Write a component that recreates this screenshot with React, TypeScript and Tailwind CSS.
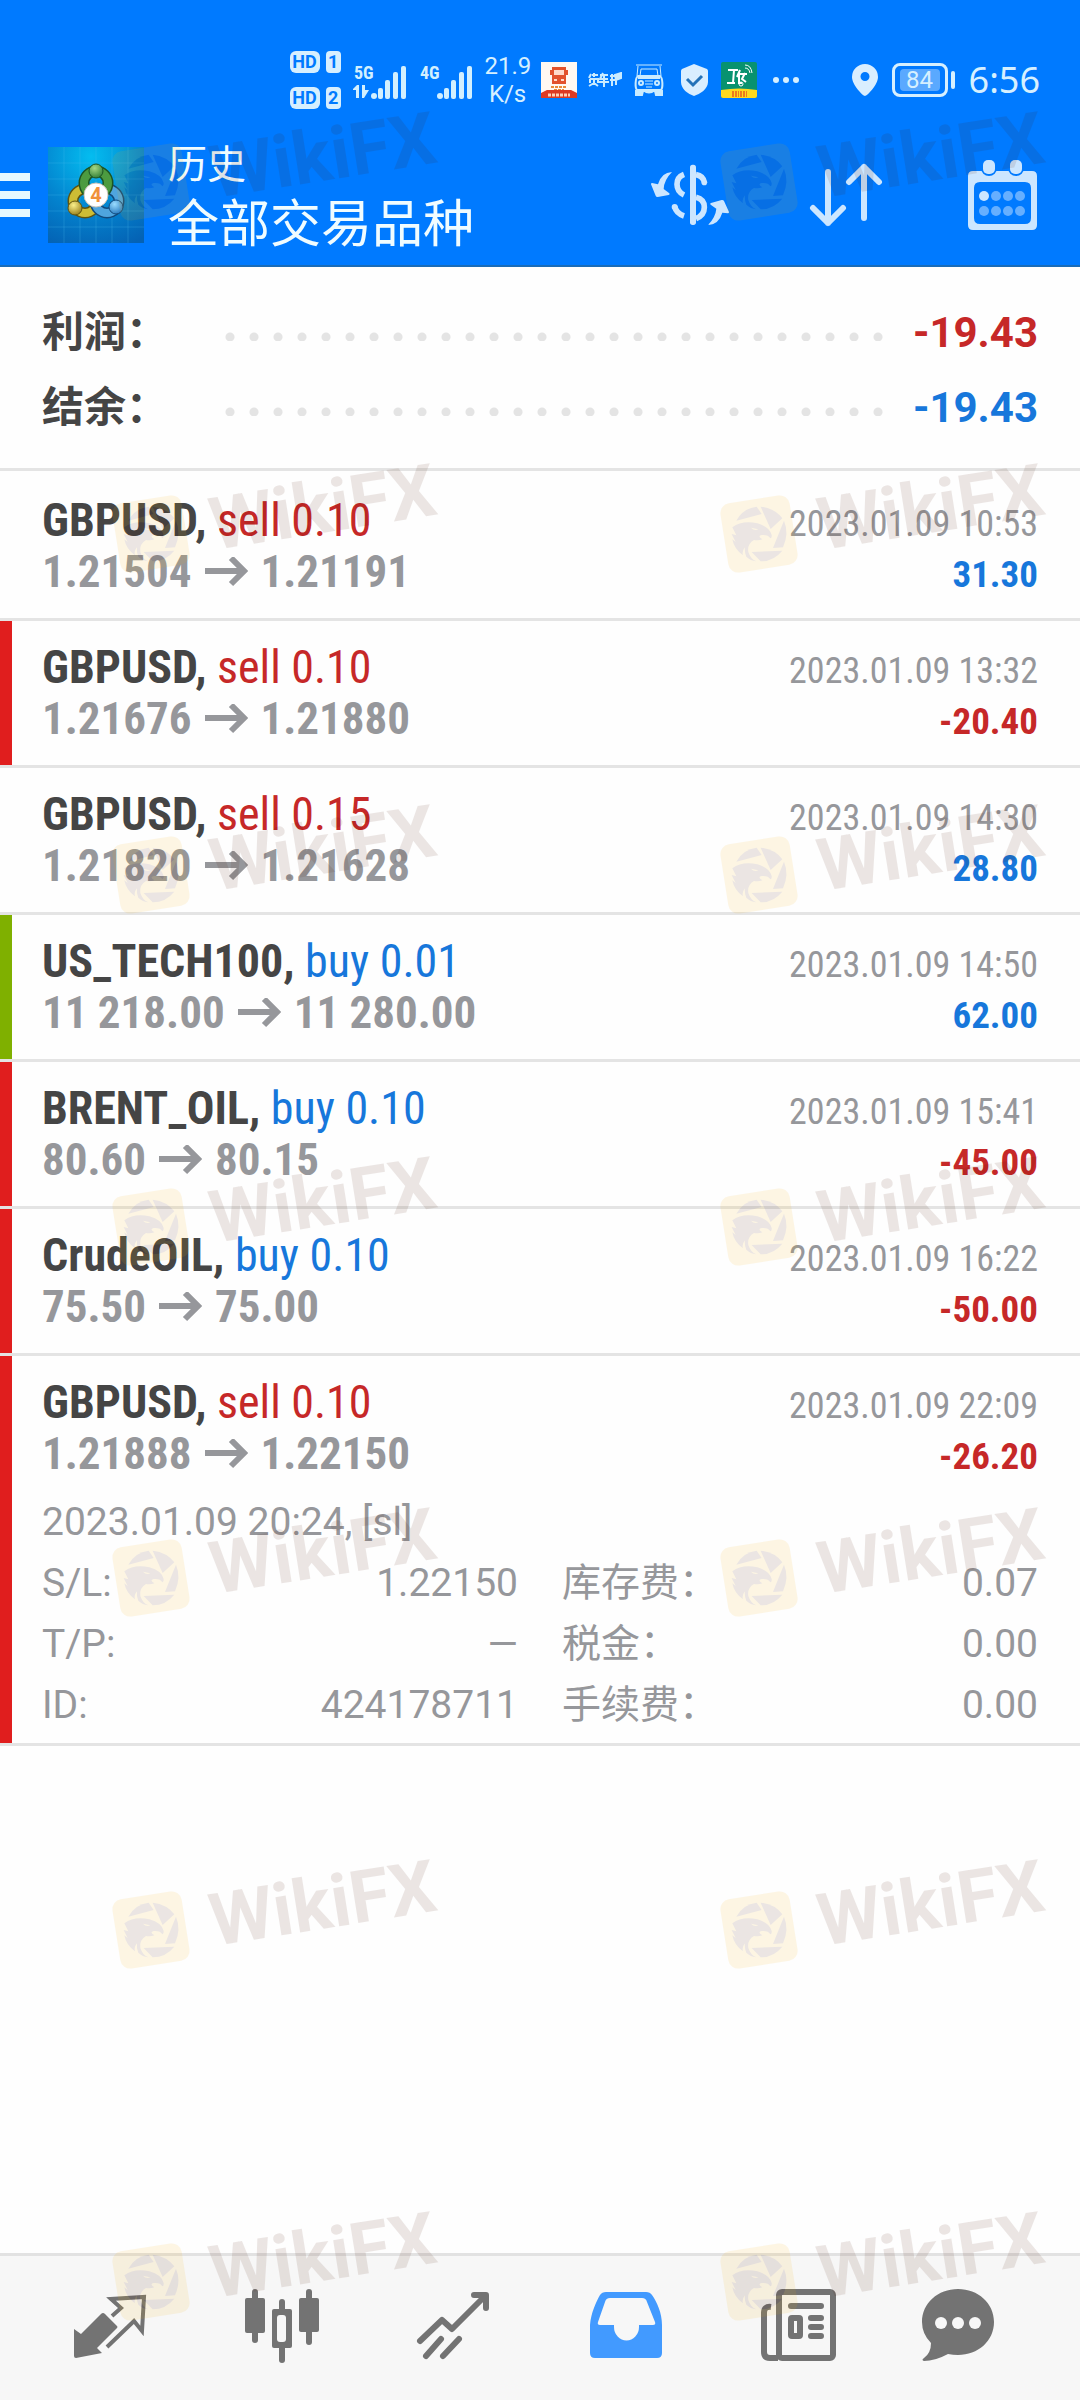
import React, { useState } from 'react';

interface Deal {
  symbol: string;
  side: 'buy' | 'sell';
  volume: string;
  open: string;
  close: string;
  time: string;
  profit: string;
  mark?: 'sl' | 'tp';
}

const deals: Deal[] = [
  { symbol: 'GBPUSD', side: 'sell', volume: '0.10', open: '1.21504', close: '1.21191', time: '2023.01.09 10:53', profit: '31.30' },
  { symbol: 'GBPUSD', side: 'sell', volume: '0.10', open: '1.21676', close: '1.21880', time: '2023.01.09 13:32', profit: '-20.40', mark: 'sl' },
  { symbol: 'GBPUSD', side: 'sell', volume: '0.15', open: '1.21820', close: '1.21628', time: '2023.01.09 14:30', profit: '28.80' },
  { symbol: 'US_TECH100', side: 'buy', volume: '0.01', open: '11 218.00', close: '11 280.00', time: '2023.01.09 14:50', profit: '62.00', mark: 'tp' },
  { symbol: 'BRENT_OIL', side: 'buy', volume: '0.10', open: '80.60', close: '80.15', time: '2023.01.09 15:41', profit: '-45.00', mark: 'sl' },
  { symbol: 'CrudeOIL', side: 'buy', volume: '0.10', open: '75.50', close: '75.00', time: '2023.01.09 16:22', profit: '-50.00', mark: 'sl' },
  { symbol: 'GBPUSD', side: 'sell', volume: '0.10', open: '1.21888', close: '1.22150', time: '2023.01.09 22:09', profit: '-26.20', mark: 'sl' },
];

const details = [
  ['S/L:', '1.22150', '库存费：', '0.07'],
  ['T/P:', '—', '税金：', '0.00'],
  ['ID:', '424178711', '手续费：', '0.00'],
];

const watermarkTops = [92, 444, 785, 1137, 1488, 1840, 2192];

const Signal: React.FC<{ label: string; data?: boolean }> = ({ label, data }) => (
  <svg className="h-10 w-[54px] overflow-visible" viewBox="0 -4 54 40" fill="#d2f0ff">
    <text x="1" y="15" fontSize="18" fontWeight="700" fontFamily="'Roboto Condensed', Roboto, sans-serif">{label}</text>
    {data && <path d="M0 25l4-4h2v13H3v-8H0zM9 21h3v5h4l-5 8H9z" />}
    <circle cx="21" cy="32" r="3" />
    <rect x="25" y="24" width="5" height="11" rx="2" />
    <rect x="32" y="16" width="5" height="19" rx="2" />
    <rect x="40" y="8" width="5" height="27" rx="2" />
    <rect x="48" y="2" width="5" height="33" rx="2" />
  </svg>
);

const SimBadge: React.FC<{ slot: string }> = ({ slot }) => (
  <div className="flex items-center gap-1.5 text-[18px] leading-[22px] font-bold text-[#007aff]">
    <span className="w-[30px] rounded-md bg-[#d6efff] text-center">HD</span>
    <span className="w-[15px] rounded bg-[#d6efff] text-center">{slot}</span>
  </div>
);

const StatusBar: React.FC = () => (
  <div className="flex h-16 items-center justify-end pr-10 text-[#d6f0ff]">
    <div className="flex flex-col gap-3.5">
      <SimBadge slot="1" />
      <SimBadge slot="2" />
    </div>
    <div className="ml-3 flex gap-3">
      <Signal label="5G" data />
      <Signal label="4G" />
    </div>
    <div className="ml-3 w-[46px] text-center text-[24px] leading-7">21.9 K/s</div>
    <svg className="ml-2.5 size-9" viewBox="0 0 36 36">
      <rect width="36" height="36" fill="#fff8f2" />
      <path d="M11 5h14v3h2v5h-2v9H11v-9H9V8h2z" fill="#e2512c" />
      <path d="M13 8h10v5H13zM13 17h3v2h-3zM20 17h3v2h-3z" fill="#ffd9c9" />
      <path d="M10 25h16M13 28h10" stroke="#e98b3a" strokeWidth="2" strokeDasharray="3 1" />
      <path d="M0 31l6-3h24l6 3v5H0z" fill="#dd3a24" />
      <path d="M7 33h22" stroke="#ffd0b8" strokeWidth="3" strokeDasharray="3 1" />
    </svg>
    <svg className="ml-[11px] h-4 w-[34px]" viewBox="0 0 34 16" fill="none" stroke="#c9ebff" strokeWidth="2">
      <path d="M3 2L1 6M6 1v4M4 3h6M2 7h8v4M2 7v4M6 8v3l-5 3M6 11l4 3M12 3h8M15 1l-3 6h8M11 10h10M16 4v11M22 4h5M24 2v12M22 8h5" />
      <path d="M27 3l6-2v5l-5 2zM28 8v5" fill="#c9ebff" />
    </svg>
    <svg className="ml-3 h-8 w-[30px]" viewBox="0 0 30 32" fill="none" stroke="#c9ebff">
      <path d="M2 1h26M4 2L3 12M26 2l1 10M7 5h16l1 7H6z" strokeWidth="1" />
      <path d="M4 12C1 14 1 24 3 26h24c2-2 2-12-1-14zM4 14h22" strokeWidth="2" />
      <path d="M2 26v5h6l1-4M28 26v5h-6l-1-4M9 26q6 5 12 0" strokeWidth="2" fill="#c9ebff" />
      <circle cx="7" cy="19" r="2" strokeWidth="2" />
      <circle cx="23" cy="19" r="2" strokeWidth="2" />
      <path d="M11 17h8M11 20h8M12 23h6" strokeWidth="1" />
    </svg>
    <svg className="ml-4 h-[34px] w-[29px]" viewBox="0 0 29 34">
      <path d="M14 1L27 6q1 1 1 2v11C28 26 20 31 14 33 8 31 1 26 1 19V8q0-1 1-2z" fill="#d9eeff" />
      <path d="M7 16l6 6 9-9" fill="none" stroke="#2472b8" strokeWidth="3" />
    </svg>
    <svg className="ml-3 size-9" viewBox="0 0 36 36">
      <rect width="36" height="36" rx="2" fill="#08926f" />
      <path d="M7 8h10M13 8l-1 13M6 21h8M19 8l-3 7M18 12h8M18 12v9h3M24 11l-3 6 4 3" stroke="#fff" strokeWidth="2" fill="none" />
      <circle cx="20" cy="22" r="2" stroke="#fff" fill="none" />
      <path d="M24 6q4 0 5 5M24 3q6 0 7 8" stroke="#fff" fill="none" />
      <path d="M0 28q18-3 36 0v6q0 2-2 2H2q-2 0-2-2z" fill="#ffd91e" />
      <path d="M11 32h7M19 32h7" stroke="#ee7b1b" strokeWidth="6" strokeDasharray="2 1" />
    </svg>
    <svg className="ml-[15px] h-2 w-7" viewBox="0 0 28 8" fill="#d6f0ff">
      <circle cx="4" cy="4" r="3" />
      <circle cx="14" cy="4" r="3" />
      <circle cx="24" cy="4" r="3" />
    </svg>
    <svg className="ml-[52px] h-8 w-[26px]" viewBox="0 0 26 32">
      <path d="M13 0a13 13 0 0 1 13 13C26 21 15 32 13 32S0 21 0 13A13 13 0 0 1 13 0zm0 8a4 4 0 1 0 0 9 4 4 0 0 0 0-9z" fill="#d9eeff" fillRule="evenodd" />
    </svg>
    <div className="ml-3.5 flex items-center gap-[3px]">
      <div className="flex h-[34px] w-14 items-center justify-center rounded-lg border-[3px] border-[#d6f0ff]">
        <span className="w-10 rounded bg-[#5aa9ff] text-center text-[24px] leading-[22px]">84</span>
      </div>
      <div className="h-[18px] w-1 rounded bg-[#d6f0ff]" />
    </div>
    <span className="ml-3.5 font-['Noto_Sans',sans-serif] text-[36px] leading-10">6:56</span>
  </div>
);

const AppLogo: React.FC = () => (
  <svg className="ml-[18px] size-24" viewBox="0 0 96 96">
    <defs>
      <radialGradient id="sky" cx=".45" cy=".1" r="1">
        <stop offset="0" stopColor="#04bdf0" />
        <stop offset=".55" stopColor="#0384cf" />
        <stop offset="1" stopColor="#0462b4" />
      </radialGradient>
      <radialGradient id="green" cx=".4" cy=".3" r=".8"><stop offset="0" stopColor="#a5d884" /><stop offset="1" stopColor="#27762e" /></radialGradient>
      <radialGradient id="gold" cx=".4" cy=".3" r=".8"><stop offset="0" stopColor="#fbf08a" /><stop offset="1" stopColor="#8f7510" /></radialGradient>
      <radialGradient id="azure" cx=".4" cy=".3" r=".8"><stop offset="0" stopColor="#9bdcff" /><stop offset="1" stopColor="#1c70b8" /></radialGradient>
    </defs>
    <rect width="96" height="96" fill="url(#sky)" />
    <path d="M0 16h96M0 32h96M0 48h96M0 64h96M0 80h96M16 0v96M32 0v96M48 0v96M64 0v96M80 0v96" stroke="#4fc3ee" strokeOpacity=".25" />
    <g fill="none" strokeWidth="8">
      <circle cx="37" cy="54" r="12" stroke="#5f5410" strokeWidth="11" />
      <circle cx="37" cy="54" r="12" stroke="#cdbd35" />
      <circle cx="59" cy="54" r="12" stroke="#124a7c" strokeWidth="11" />
      <circle cx="59" cy="54" r="12" stroke="#4fa5de" />
      <circle cx="48" cy="36" r="12" stroke="#1d5423" strokeWidth="11" />
      <circle cx="48" cy="36" r="12" stroke="#4c9b40" />
    </g>
    <circle cx="48" cy="24" r="7" fill="url(#green)" stroke="#1d5423" />
    <circle cx="27" cy="61" r="7" fill="url(#gold)" stroke="#5f5410" />
    <circle cx="68" cy="60" r="7" fill="url(#azure)" stroke="#124a7c" />
    <circle cx="48" cy="48" r="12" fill="#fff" stroke="#c9c4bb" />
    <text x="48" y="55" textAnchor="middle" fontSize="20" fontWeight="700" fontFamily="Roboto, sans-serif" fill="#f0913a">4</text>
  </svg>
);

const CurrencyIcon: React.FC = () => (
  <svg className="h-[62px] w-[78px]" viewBox="93 156 234 186" fill="#cce6ff">
    <rect x="210" y="158" width="18" height="181" rx="8" />
    <path d="M192 187q-21 8-21 30t21 32M164 283q4 21 28 29M228 188q22 3 26 26M228 256q25 6 25 30t-25 34" fill="none" stroke="#cce6ff" strokeWidth="17" />
    <circle cx="253" cy="212" r="8" />
    <circle cx="164" cy="285" r="9" />
    <path d="M156 180q-32 1-42 37l-18-4q-3 0-3 4l14 34q1 4 6 4l33-6q5-1 2-5l-17-13q1-27 25-51z" />
    <path d="M264 339q32-1 43-37l17 2q3 0 3-4l-15-33q-2-4-7-3l-32 9q-5 2-1 5l17 12q-2 25-25 49z" />
  </svg>
);

const SortIcon: React.FC = () => (
  <svg className="h-16 w-[74px]" viewBox="0 0 74 64" fill="none" stroke="#cce6ff" strokeWidth="6" strokeLinecap="round" strokeLinejoin="round">
    <path d="M19 9v51M4 45l15 15 15-15" />
    <path d="M55 55V4M40 19L55 4l15 15" />
  </svg>
);

const CalendarIcon: React.FC = () => (
  <svg className="h-[72px] w-[70px]" viewBox="0 0 70 72">
    <path d="M5 12H64q5 0 5 5V66q0 5-5 5H5q-5 0-5-5V17q0-5 5-5zM12 23q-6 0-6 6V59q0 6 6 6H57q6 0 6-6V29q0-6-6-6z" fill="#cce6ff" fillRule="evenodd" />
    <rect x="13" y="-1" width="16" height="18" rx="8" fill="#007aff" />
    <rect x="40" y="-1" width="16" height="18" rx="8" fill="#007aff" />
    <rect x="15" y="1" width="12" height="14" rx="5" fill="#cce6ff" />
    <rect x="42" y="1" width="12" height="14" rx="5" fill="#cce6ff" />
    {[16, 28, 40, 52].map((x) => (
      <g key={x} fill="#66afff">
        <circle cx={x} cy="37" r="5" fill={x === 16 ? '#cce6ff' : '#66afff'} />
        <circle cx={x} cy="52" r="5" />
      </g>
    ))}
  </svg>
);

const Summary: React.FC<{ label: string; value: string; tone: string }> = ({ label, value, tone }) => (
  <div className="flex items-center text-[42px] leading-[75px] font-bold">
    <dt className="w-44 text-[#454545]">{label}</dt>
    <div className="h-4 flex-1 bg-[radial-gradient(circle,#e4e4e4_4px,transparent_5px)] bg-[length:24px_24px] bg-repeat-x" />
    <dd className={`w-[148px] text-right ${tone}`}>{value}</dd>
  </div>
);

const DealRow: React.FC<{ deal: Deal; open?: boolean }> = ({ deal, open }) => (
  <li className="flex border-b-[3px] border-[#e4e4e4]">
    <div className={`w-3 ${deal.mark === 'sl' ? 'bg-[#e01e1e]' : deal.mark === 'tp' ? 'bg-[#7fb000]' : ''}`} />
    <div className="flex-1 pl-[30px] pr-[42px]">
      <div className="py-5 font-['Roboto_Condensed',Roboto,sans-serif] leading-[52px]">
        <div className="flex h-[52px] items-baseline justify-between">
          <h2 className="text-[46px]">
            <span className="font-bold text-[#454545]">{deal.symbol},</span>{' '}
            <span className={deal.side === 'buy' ? 'text-[#1777db]' : 'text-[#c62828]'}>{deal.side} {deal.volume}</span>
          </h2>
          <time className="text-[36px] text-[#96979b]">{deal.time}</time>
        </div>
        <div className="flex h-[52px] items-baseline justify-between font-bold">
          <p className="flex items-baseline text-[45px] text-[#96979b]">
            {deal.open}
            <svg className="mx-[13px] h-[30px] w-[43px]" viewBox="0 0 43 30" fill="none" stroke="currentColor" strokeWidth="6">
              <path d="M0 14h38M26 1l13 13-13 13" />
            </svg>
            {deal.close}
          </p>
          <span className={`text-[37px] ${deal.profit.startsWith('-') ? 'text-[#c62828]' : 'text-[#1777db]'}`}>{deal.profit}</span>
        </div>
      </div>
      {open && (
        <div className="-mt-2 pb-[7px] text-[39px] leading-[61px] text-[#96979b]">
          <p>2023.01.09 20:24, [sl]</p>
          <dl className="grid grid-cols-2 gap-x-11">
            {details.map(([a, b, c, d]) => (
              <React.Fragment key={a}>
                <div className="flex h-[61px] justify-between"><dt>{a}</dt><dd>{b}</dd></div>
                <div className="flex h-[61px] justify-between"><dt>{c}</dt><dd>{d}</dd></div>
              </React.Fragment>
            ))}
          </dl>
        </div>
      )}
    </div>
  </li>
);

const tabs = [
  {
    name: '行情',
    icon: (
      <svg className="size-[76px]" viewBox="0 0 76 76" fill="currentColor">
        <path d="M2 41l7 5L29 26q2-2 4 0l12 12q1 1 0 2L25 60l5 5L4 70Q2 70 2 68z" />
        <path d="M40 28l9-8L39 11 72 9l-2 34-8-10-27 26" fill="none" stroke="currentColor" strokeWidth="4" />
      </svg>
    ),
  },
  {
    name: '图表',
    icon: (
      <svg className="size-[76px]" viewBox="0 0 76 76" fill="currentColor">
        <rect x="1" y="10" width="20" height="35" rx="2" />
        <rect x="8" y="1" width="6" height="54" rx="3" />
        <rect x="28" y="21" width="20" height="39" rx="2" />
        <rect x="35" y="11" width="6" height="64" rx="3" />
        <rect x="33" y="27" width="9" height="27" rx="3" fill="#f7f7f7" />
        <rect x="55" y="10" width="20" height="34" rx="2" />
        <rect x="62" y="1" width="6" height="56" rx="3" />
      </svg>
    ),
  },
  {
    name: '交易',
    icon: (
      <svg className="size-[76px]" viewBox="0 0 76 76" fill="none" stroke="currentColor" strokeWidth="6" strokeLinecap="round">
        <path d="M4 53l22-21 10 9L69 8M58 7h12v13" strokeLinejoin="round" />
        <path d="M10 68l15-17M27 68l16-17" />
      </svg>
    ),
  },
  {
    name: '历史',
    icon: (
      <svg className="size-[76px]" viewBox="0 0 76 76" fill="currentColor" fillRule="evenodd">
        <path d="M2 37C3 25 8 14 12 7Q14 4 18 4H58Q62 4 64 7C69 14 74 25 74 37V65q0 5-5 5H7q-5 0-5-5zM12 37H26V39A12 13 0 0 0 51 39V37H65Q68 37 67 34L59 14Q58 10 54 10H22Q18 10 17 14L10 34Q9 37 12 37z" />
      </svg>
    ),
  },
  {
    name: '新闻',
    icon: (
      <svg className="size-[76px]" viewBox="0 0 76 76" fill="none" stroke="currentColor" strokeWidth="6">
        <rect x="19" y="4" width="54" height="66" rx="3" />
        <path d="M11 19Q4 18 4 25V64Q4 70 10 70H18" />
        <path d="M31 18H61M51 30H61M51 39H61M51 48H61" strokeLinecap="round" />
        <rect x="31" y="30" width="9" height="18" rx="1" />
      </svg>
    ),
  },
  {
    name: '聊天',
    icon: (
      <svg className="h-[76px] w-[100px]" viewBox="0 0 100 76" fill="currentColor">
        <path d="M38 1C58 1 74 15 74 34S58 67 38 67q-5 0-10-1Q15 73 4 73q-3-1 0-3 7-5 7-15Q2 46 2 34C2 15 18 1 38 1z" />
        <g fill="#f7f7f7">
          <circle cx="21" cy="35" r="6" />
          <circle cx="38" cy="35" r="6" />
          <circle cx="55" cy="35" r="6" />
        </g>
      </svg>
    ),
  },
];

const Watermark: React.FC = () => (
  <svg className="h-[150px] w-[340px] overflow-visible" viewBox="0 -18 340 150">
    <g opacity=".1">
      <rect x="4" y="37" width="70" height="70" rx="10" fill="#f5af05" transform="rotate(-9 39 72)" />
      <g transform="translate(-101 -2) scale(.3333)" fill="#4b1400">
        <path d="M352 182Q372 145 413 140L428 162Z" />
        <path d="M425 140Q468 145 490 175L455 207Z" />
        <path d="M495 182Q511 220 492 262L462 264Z" />
        <path d="M490 272Q464 304 425 304L398 276Z" />
        <path d="M340 202Q370 180 415 190 452 200 458 225 459 234 454 235 448 223 428 225 414 228 430 238 420 242 405 240 384 252 388 276 395 298 412 304 395 302 382 290 376 276 378 262 368 274 372 286 346 268 340 238L350 246 338 222 352 226Z" />
        <path d="M396 203l22 5q-12 6-22-5" fill="#f5af05" />
      </g>
      <text
        x="0" y="0" transform="translate(102 88) rotate(-9)" fontFamily="Roboto, sans-serif" fontWeight="700" fontSize="73"
        fill="#4b1400"
      >
        WikiFX
      </text>
    </g>
  </svg>
);

const App: React.FC = () => {
  const [tab, setTab] = useState<number>(3);

  return (
    <div className="relative flex min-h-screen flex-col overflow-hidden bg-[#fefefe] font-[Roboto,'Noto_Sans_CJK_SC',sans-serif]" lang="zh-CN">
      <header className="border-b-2 border-[#1a6cb8] bg-[#007aff] pt-12">
        <StatusBar />
        <div className="mt-3 flex h-[141px] items-center pr-[42px]">
          <button aria-label="菜单" className="flex w-[30px] flex-col gap-2.5">
            <span className="h-2 bg-[#e6f8ff]" />
            <span className="h-2 bg-[#e6f8ff]" />
            <span className="h-2 bg-[#e6f8ff]" />
          </button>
          <AppLogo />
          <div className="ml-6 flex-1 pt-2 text-[#f0fcff]">
            <p className="text-[39px] leading-[52px]">历史</p>
            <h1 className="text-[51px] leading-[68px]">全部交易品种</h1>
          </div>
          <button aria-label="货币"><CurrencyIcon /></button>
          <button aria-label="排序" className="ml-20"><SortIcon /></button>
          <button aria-label="日期" className="ml-[85px]"><CalendarIcon /></button>
        </div>
      </header>

      <main className="flex-1">
        <dl className="border-b-[3px] border-[#e4e4e4] px-[42px] pt-7 pb-[23px]">
          <Summary label="利润：" value="-19.43" tone="text-[#c62828]" />
          <Summary label="结余：" value="-19.43" tone="text-[#1777db]" />
        </dl>
        <ul className="pt-[3px]">
          {deals.map((deal, i) => (
            <DealRow key={deal.time} deal={deal} open={i === deals.length - 1} />
          ))}
        </ul>
      </main>

      <nav className="flex h-[147px] border-t-[3px] border-[#e2e2e2] bg-[#f7f7f7] px-6 pb-1">
        {tabs.map(({ name, icon }, i) => (
          <button
            key={name}
            aria-label={name}
            onClick={() => setTab(i)}
            className={`flex flex-1 items-center justify-center ${tab === i ? 'text-[#429aff]' : 'text-[#737373]'}`}
          >
            {icon}
          </button>
        ))}
      </nav>

      {/* Watermark layer over the whole screen */}
      <div aria-hidden="true" className="pointer-events-none absolute inset-0">
        {watermarkTops.map((top) => (
          <div key={top} className="absolute inset-x-0 flex justify-between pl-28 pr-5" style={{ top }}>
            <Watermark />
            <Watermark />
          </div>
        ))}
      </div>
    </div>
  );
};

export default App;
